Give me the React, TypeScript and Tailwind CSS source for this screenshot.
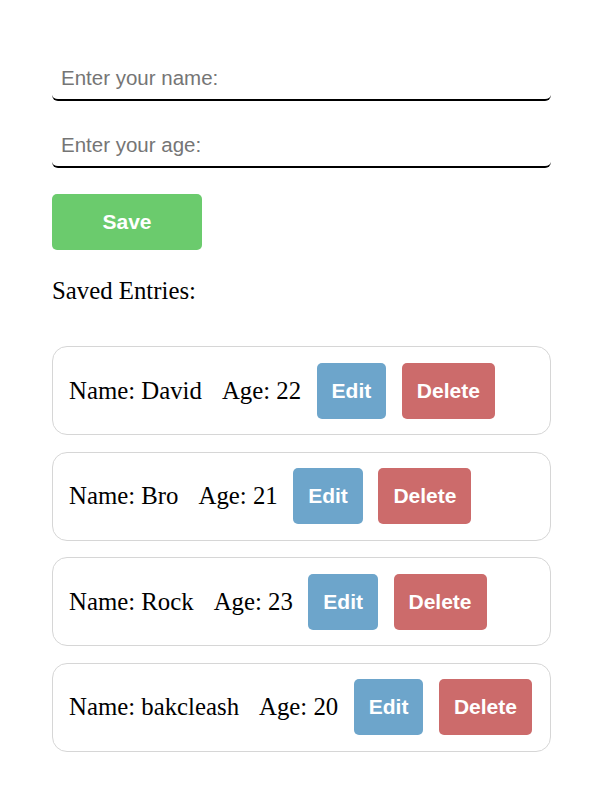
import React from "react";

const entries = [
  { name: "David", age: 22 },
  { name: "Bro", age: 21 },
  { name: "Rock", age: 23 },
  { name: "bakcleash", age: 20 },
];

export default function App() {
  return (
    <div className="min-h-screen bg-white">
      <div className="ml-[52px] w-[499px] pt-[57px]">
        <input
          className="block h-[44px] w-full rounded-[6px] border-b-2 border-black bg-white pl-[9px] font-['Liberation_Sans',Arial,sans-serif] text-[20.5px] text-black outline-none placeholder:text-[#757575]"
          placeholder="Enter your name:"
        />
        <input
          className="mt-[23px] block h-[44px] w-full rounded-[6px] border-b-2 border-black bg-white pl-[9px] font-['Liberation_Sans',Arial,sans-serif] text-[20.5px] text-black outline-none placeholder:text-[#757575]"
          placeholder="Enter your age:"
        />
        <button className="mt-[26px] block h-[56px] w-[150px] rounded-[5px] bg-[#6bcb6d] font-['Liberation_Sans',Arial,sans-serif] text-[21px] font-bold text-white">
          Save
        </button>
        <p className="mt-[27px] font-['Liberation_Serif','Times_New_Roman',serif] text-[24.8px] leading-[28px] text-black">
          Saved Entries:
        </p>
        <div className="mt-[41px] flex flex-col gap-[16.5px]">
          {entries.map((e) => (
            <div
              key={e.name}
              className="flex h-[89px] items-center rounded-[15px] border border-[#d6d6d6] pl-[16px]"
            >
              <span className="font-['Liberation_Serif','Times_New_Roman',serif] text-[24.8px] text-black">
                Name: {e.name}
              </span>
              <span className="ml-[20px] font-['Liberation_Serif','Times_New_Roman',serif] text-[24.8px] text-black">
                Age: {e.age}
              </span>
              <button className="ml-[15.5px] h-[56px] rounded-[5px] bg-[#6da5cb] px-[15px] font-['Liberation_Sans',Arial,sans-serif] text-[21px] font-bold text-white">
                Edit
              </button>
              <button className="ml-[15.5px] h-[56px] rounded-[5px] bg-[#cc6b6b] px-[15px] font-['Liberation_Sans',Arial,sans-serif] text-[21px] font-bold text-white">
                Delete
              </button>
            </div>
          ))}
        </div>
      </div>
    </div>
  );
}
